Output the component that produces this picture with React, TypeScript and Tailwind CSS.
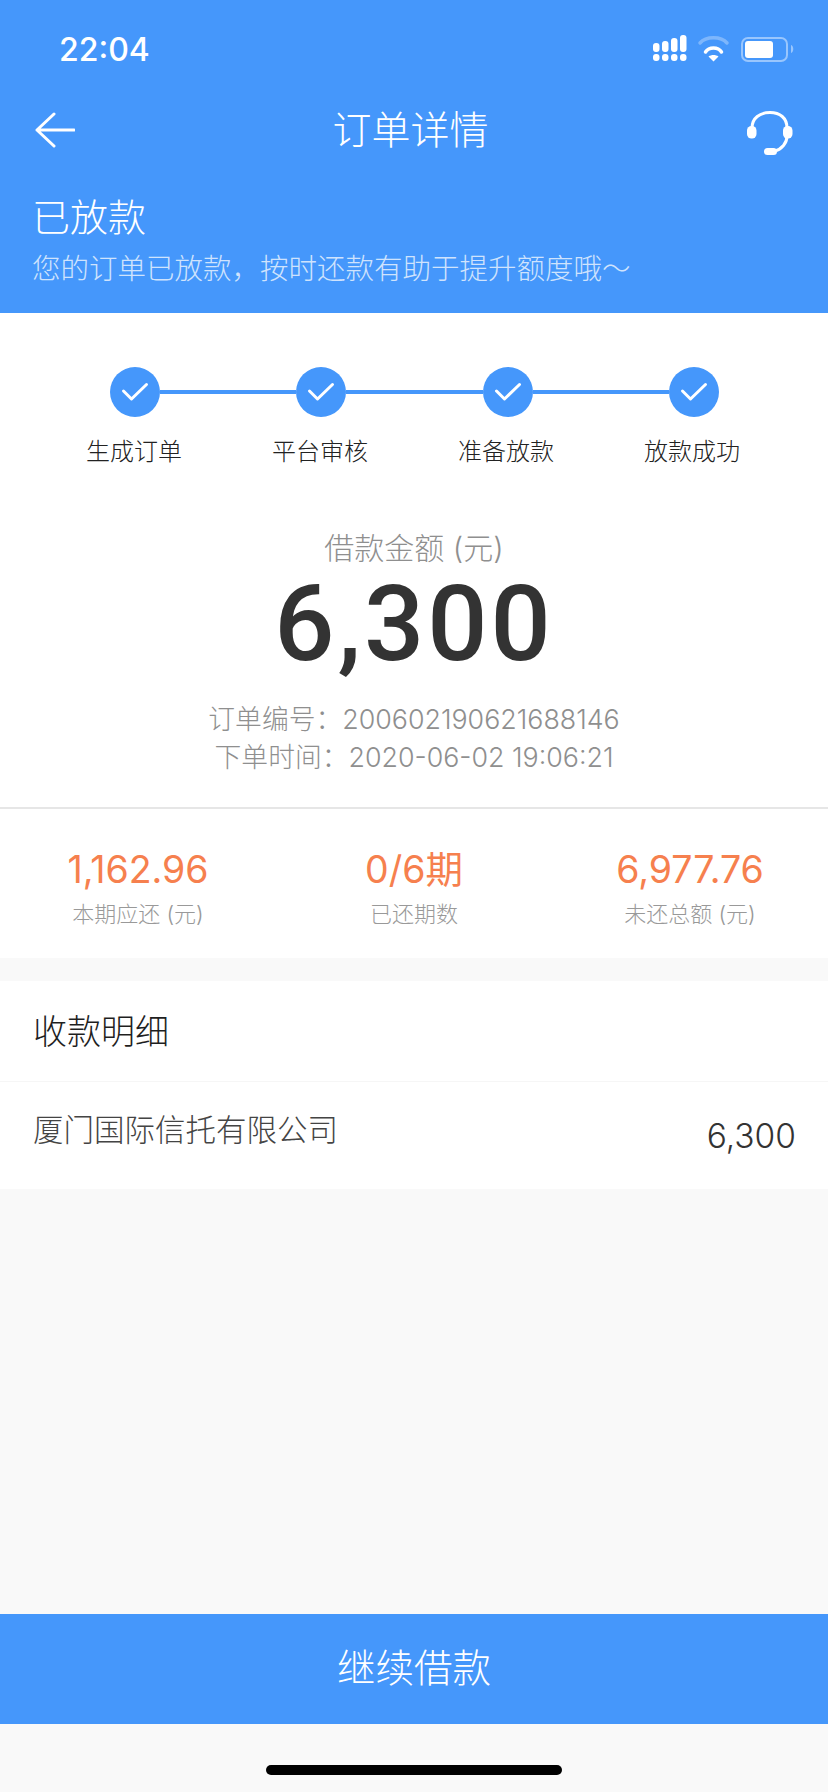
import { Fragment } from "react";

const CJK = "font-['Inter','Noto_Sans_CJK_SC',sans-serif]";
const STEPS = ["生成订单", "平台审核", "准备放款", "放款成功"];
const STATS = [
  { value: "1,162.96", label: "本期应还 (元)" },
  { value: "0/6期", label: "已还期数" },
  { value: "6,977.76", label: "未还总额 (元)" },
];

function StatusIcons() {
  return (
    <svg width="141" height="27" viewBox="0 0 141 27" fill="none">
      {/* signal */}
      <rect x="0" y="8" width="6.5" height="9" rx="3" fill="#fff" />
      <rect x="9" y="6" width="6.5" height="11" rx="3" fill="#fff" />
      <rect x="18" y="3" width="6.5" height="14" rx="3" fill="#fff" />
      <rect x="27" y="0" width="6.5" height="17" rx="3" fill="#fff" />
      <rect x="0" y="19" width="6.5" height="7" rx="3" fill="#fff" />
      <rect x="9" y="19" width="6.5" height="7" rx="3" fill="#fff" />
      <rect x="18" y="19" width="6.5" height="7" rx="3" fill="#fff" />
      <rect x="27" y="19" width="6.5" height="7" rx="3" fill="#fff" />
      {/* wifi */}
      <path d="M47 8C53 1 68 1 74 8" stroke="#fff" strokeOpacity="0.3" strokeWidth="3.5" strokeLinecap="round" />
      <path d="M52.5 17C56 11.5 65 11.5 68.5 17" stroke="#fff" strokeWidth="3.5" strokeLinecap="round" />
      <path d="M55.5 21.5L60.5 26.5L65.5 21.5C62.5 19.5 58.5 19.5 55.5 21.5Z" fill="#fff" />
      {/* battery */}
      <rect x="89" y="3" width="45" height="23" rx="6" stroke="#fff" strokeOpacity="0.45" strokeWidth="2" />
      <rect x="92" y="6" width="28" height="17" rx="3" fill="#fff" />
      <path d="M138 10C141 11 141 17 138 18Z" fill="#fff" fillOpacity="0.45" />
    </svg>
  );
}

function Headset() {
  return (
    <svg width="48" height="48" viewBox="0 0 48 48" fill="none" className="mt-[6px]">
      <path d="M6 19C6 9 14 3.5 24 3.5C34 3.5 41 9 41 19V27C41 34 36 40 28 42.5" stroke="#fff" strokeWidth="3" strokeLinecap="round" />
      <rect x="1" y="17" width="9.5" height="12.5" rx="4.5" fill="#fff" />
      <rect x="37" y="17" width="9.5" height="12.5" rx="4.5" fill="#fff" />
      <rect x="18" y="39" width="13" height="7" rx="3.5" fill="#fff" />
    </svg>
  );
}

export default function App() {
  return (
    <div className={`${CJK} flex h-[1792px] w-[828px] flex-col overflow-hidden bg-[#f9f9f9]`}>
      {/* Header */}
      <div className="h-[313px] bg-[#4597fb] text-white">
        <div className="flex h-[92px] justify-between pl-[59px] pr-[34px]">
          <span className="mt-[30px] text-[32px] leading-[40px] font-medium">22:04</span>
          <div className="mt-[35px]">
            <StatusIcons />
          </div>
        </div>
        <div className="flex h-[76px] items-center justify-between pl-[35px] pr-[34px]">
          <svg width="40" height="36" viewBox="0 0 40 36" fill="none">
            <path d="M19 2L2 18L19 34M2 18H39" stroke="#fff" strokeWidth="3" strokeLinecap="round" strokeLinejoin="round" />
          </svg>
          <span className="text-[39px] leading-[50px] font-light">订单详情</span>
          <Headset />
        </div>
        <div className="pl-[32px] pt-[24px]">
          <div className="text-[38px] leading-[50px] font-light">已放款</div>
          <div className="mt-[8px] text-[28.5px] leading-[38px] font-light text-[#cfe3fd]">您的订单已放款，按时还款有助于提升额度哦～</div>
        </div>
      </div>

      {/* Loan summary */}
      <div className="h-[496px] border-b-2 border-[#e6e6e6] bg-white pt-[54px]">
        <div className="flex items-center pl-[110px] pr-[109px]">
          {STEPS.map((s, i) => (
            <Fragment key={s}>
              <div className="flex h-[50px] w-[50px] shrink-0 items-center justify-center rounded-full bg-[#4597fb]">
                <svg width="28" height="20" viewBox="0 0 28 20" fill="none">
                  <path d="M2.5 9L10.5 17L25.5 2.5" stroke="#fff" strokeWidth="3" strokeLinecap="round" strokeLinejoin="round" />
                </svg>
              </div>
              {i < 3 && <div className="h-1 flex-1 bg-[#4597fb]" />}
            </Fragment>
          ))}
        </div>
        <div className="mt-[17px] grid grid-cols-4 pl-[41px] pr-[43px]">
          {STEPS.map((s) => (
            <div key={s} className="text-center text-2xl leading-[36px] font-light text-[#222]">{s}</div>
          ))}
        </div>
        <div className="mt-[58px] text-center text-[30px] leading-[40px] font-light text-[#8f8f8f]">借款金额 (元)</div>
        <div className="text-center font-['Roboto','Inter',sans-serif] text-[106px] leading-[112px] font-medium tracking-[3px] text-[#333]">6,300</div>
        <div className="mt-[20px] text-center text-[26.8px] leading-[38px] font-light text-[#8f8f8f]">
          <div>订单编号：200602190621688146</div>
          <div>下单时间：2020-06-02 19:06:21</div>
        </div>
      </div>

      {/* Repayment stats */}
      <div className="grid h-[149px] grid-cols-3 bg-white pt-[38px]">
        {STATS.map((s) => (
          <div key={s.label} className="text-center">
            <div className="text-[37.5px] leading-[46px] font-normal text-[#f6804e]">{s.value}</div>
            <div className="mt-[6px] text-[22px] leading-[30px] font-light text-[#999]">{s.label}</div>
          </div>
        ))}
      </div>

      {/* Payee */}
      <div className="mt-[23px] bg-white">
        <div className="flex h-[101px] items-center border-b border-[#f6f6f6] px-[33px] text-[34px] font-light text-[#1f1f1f]">收款明细</div>
        <div className="flex h-[107px] justify-between pl-[33px] pr-[32px] font-light">
          <span className="mt-[26px] text-[30.5px] leading-[44px] text-[#444]">厦门国际信托有限公司</span>
          <span className="mt-[32px] text-[33.5px] leading-[44px] text-[#333]">6,300</span>
        </div>
      </div>

      <div className="flex-1" />

      <button className="h-[110px] w-full bg-[#4597fb] text-[38.5px] font-light text-white">继续借款</button>
      <div className="flex h-[68px] items-start justify-center pt-[41px]">
        <div className="h-[10px] w-[296px] rounded-full bg-black" />
      </div>
    </div>
  );
}
